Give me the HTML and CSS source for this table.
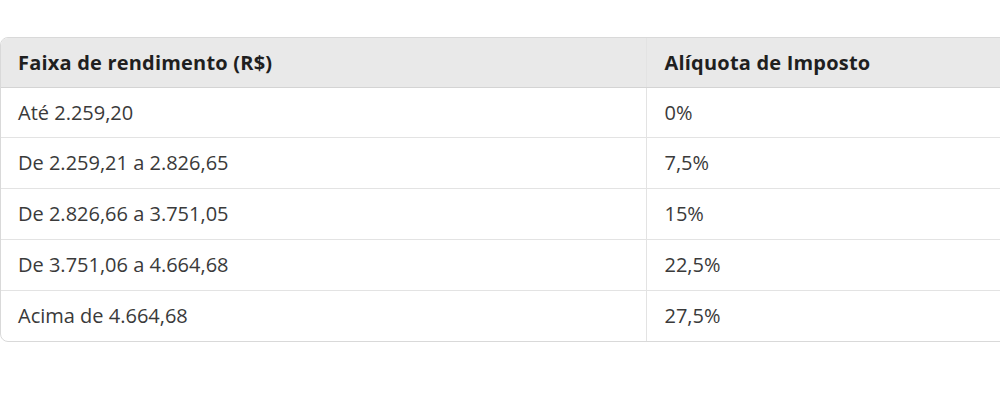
FILE: index.html
```html
<!DOCTYPE html>
<html lang="pt-BR">
<head>
<meta charset="utf-8">
<link rel="stylesheet" href="styles.css">
</head>
<body>
<div class="wrap">
  <table class="tax">
    <thead>
      <tr><th class="c1">Faixa de rendimento (R$)</th><th>Alíquota de Imposto</th></tr>
    </thead>
    <tbody>
      <tr><td class="c1">Até 2.259,20</td><td>0%</td></tr>
      <tr><td class="c1">De 2.259,21 a 2.826,65</td><td>7,5%</td></tr>
      <tr><td class="c1">De 2.826,66 a 3.751,05</td><td>15%</td></tr>
      <tr><td class="c1">De 3.751,06 a 4.664,68</td><td>22,5%</td></tr>
      <tr><td class="c1">Acima de 4.664,68</td><td>27,5%</td></tr>
    </tbody>
  </table>
</div>
</body>
</html>
```
FILE: styles.css
```css
html, body { margin: 0; padding: 0; background: #fff; }
body { font-family: "Open Sans", "Noto Sans", sans-serif; overflow: hidden; }
.wrap {
  margin-top: 37px;
  width: 1020px;
  border: 1px solid #d9d9d9;
  border-radius: 8px;
  overflow: hidden;
}
.tax { border-collapse: collapse; width: 100%; font-size: 20px; }
.tax th, .tax td {
  text-align: left;
  padding: 0 17px;
  box-sizing: border-box;
}
.tax th { background: #e9e9e9; color: #1f1f1f; font-weight: 700; height: 49px; border-bottom: 1px solid #d4d4d4; letter-spacing: 0.2px; }
.tax td { color: #3a3a3a; height: 51px; border-top: 1px solid #e3e3e3; }
.tax tbody tr:first-child td { border-top: none; height: 50px; }
.tax .c1 { width: 645px; border-right: 1px solid #e3e3e3; }
.tax th + th, .tax td + td { padding-left: 18px; }
```
